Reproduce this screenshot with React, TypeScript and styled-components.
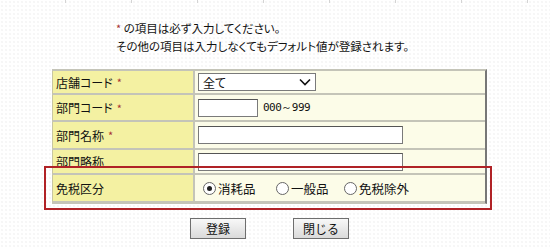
import styled, { createGlobalStyle } from "styled-components";

const GlobalStyle = createGlobalStyle`
  html, body {
    margin: 0;
    padding: 0;
    background-color: #ffffff;
    background-image: radial-gradient(#ececec 0.6px, transparent 0.8px);
    background-size: 4px 4px;
  }
  body {
    font-family: "Noto Sans CJK JP", "DejaVu Sans", sans-serif;
    font-size: 12px;
    font-feature-settings: "palt";
    color: #111;
  }
`;

const Page = styled.div`
  position: relative;
  width: 550px;
  height: 249px;
  overflow: hidden;
`;

const TabTicks = styled.div`
  display: flex;
  height: 3px;
`;

const Tick = styled.div`
  width: 65px;
  flex: none;
  border-right: 1px solid #d4d4d4;
`;

const Notes = styled.div`
  padding: 16px 0 0 116px;
  line-height: 18px;
  font-size: 11.5px;
`;

const Star = styled.span`
  color: #a83232;
  font-size: 11px;
`;

const FormTable = styled.div`
  margin: 14px 0 0 52px;
  width: 433px;
  display: grid;
  grid-template-columns: 143px 1fr;
  grid-template-rows: 24px 27px 28px 25px 28px;
  border-top: 2px solid #c4c4b8;
  border-right: 2px solid #777;
  border-bottom: 1px solid #c4c4b8;
`;

const Label = styled.div`
  background: #f4f1a2;
  border-left: 1px solid #c8c6a0;
  border-bottom: 2px solid #c4c4b8;
  border-right: 2px solid #c4c4b8;
  display: flex;
  align-items: center;
  padding-left: 3px;
  gap: 4px;
  font-size: 12px;
`;

const Value = styled.div`
  background: #fcfce8;
  border-bottom: 2px solid #c4c4b8;
  display: flex;
  align-items: center;
  padding-left: 3px;
  gap: 5px;
`;

const Select = styled.div<{ $w: number }>`
  width: ${(p) => p.$w}px;
  height: 18px;
  box-sizing: border-box;
  border: 1px solid #7a7a7a;
  background: #fff;
  display: flex;
  align-items: center;
  justify-content: space-between;
  padding: 0 4px;
  font-size: 12px;
`;

const TextBox = styled.div<{ $w: number }>`
  width: ${(p) => p.$w}px;
  height: 18px;
  box-sizing: border-box;
  border: 1px solid #7a7a7a;
  border-top-color: #555;
  background: #fff;
`;

const Hint = styled.span`
  font-family: "DejaVu Sans Mono", monospace;
  font-size: 11px;
  letter-spacing: -0.5px;
`;

const RadioGroup = styled.div`
  display: flex;
  align-items: center;
  padding-left: 5px;
`;

const RadioItem = styled.label<{ $w: number }>`
  display: flex;
  align-items: center;
  gap: 2px;
  width: ${(p) => p.$w}px;
  font-size: 12.5px;
`;

const RadioDot = styled.span<{ $on?: boolean }>`
  width: 11px;
  height: 11px;
  border-radius: 50%;
  border: 1px solid #666;
  background: #fff;
  display: flex;
  align-items: center;
  justify-content: center;
  &::after {
    content: "";
    width: 5px;
    height: 5px;
    border-radius: 50%;
    background: ${(p) => (p.$on ? "#222" : "transparent")};
  }
`;

const Buttons = styled.div`
  display: flex;
  gap: 47px;
  padding: 14px 0 0 190px;
`;

const Button = styled.button`
  width: 56px;
  height: 21px;
  padding: 0;
  border: 1px solid #6e6e6e;
  background: linear-gradient(#f8f8f8, #dadada);
  font-family: "Noto Sans CJK JP", sans-serif;
  font-size: 12px;
  color: #111;
`;

const Highlight = styled.div`
  position: absolute;
  left: 44px;
  top: 166px;
  width: 448px;
  height: 44px;
  box-sizing: border-box;
  border: 2px solid #b02226;
`;

export default function App() {
  return (
    <Page>
      <GlobalStyle />
      <TabTicks>
        {Array.from({ length: 8 }).map((_, i) => (
          <Tick key={i} />
        ))}
      </TabTicks>
      <Notes>
        <div>
          <Star>*</Star> の項目は必ず入力してください。
        </div>
        <div>その他の項目は入力しなくてもデフォルト値が登録されます。</div>
      </Notes>
      <FormTable>
        <Label>
          店舗コード <Star>*</Star>
        </Label>
        <Value>
          <Select $w={118}>
            <span>全て</span>
            <svg width="12" height="8" viewBox="0 0 12 8">
              <path d="M1 1.5 L6 6.5 L11 1.5" fill="none" stroke="#111" strokeWidth="1.6" />
            </svg>
          </Select>
        </Value>
        <Label>
          部門コード <Star>*</Star>
        </Label>
        <Value>
          <TextBox $w={60} />
          <Hint>000～999</Hint>
        </Value>
        <Label>
          部門名称 <Star>*</Star>
        </Label>
        <Value>
          <TextBox $w={205} />
        </Value>
        <Label>部門略称</Label>
        <Value>
          <TextBox $w={205} />
        </Value>
        <Label>免税区分</Label>
        <Value>
          <RadioGroup>
            <RadioItem $w={73}>
              <RadioDot $on />
              消耗品
            </RadioItem>
            <RadioItem $w={68}>
              <RadioDot />
              一般品
            </RadioItem>
            <RadioItem $w={80}>
              <RadioDot />
              免税除外
            </RadioItem>
          </RadioGroup>
        </Value>
      </FormTable>
      <Buttons>
        <Button>登録</Button>
        <Button>閉じる</Button>
      </Buttons>
      <Highlight />
    </Page>
  );
}
